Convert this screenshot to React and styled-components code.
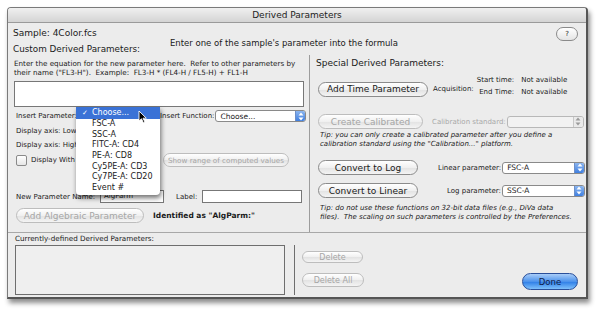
import styled, { createGlobalStyle } from 'styled-components';

const GlobalStyle = createGlobalStyle`
body {
  margin: 0;
  background: #ffffff;
  font-family: "DejaVu Sans", "Liberation Sans", sans-serif;
  color: #1a1a1a;
}
`

const menuItems = ['FSC-A', 'SSC-A', 'FITC-A: CD4', 'PE-A: CD8', 'Cy5PE-A: CD3', 'Cy7PE-A: CD20', 'Event #']

const Arrows = ({ disabled }) => (
    <svg width="6" height="9" viewBox="0 0 6 9">
        <path d="M3 0.5 L5.5 3.5 L0.5 3.5 Z" fill={disabled ? '#9a9a9a' : '#ffffff'}/>
        <path d="M3 8.5 L5.5 5.5 L0.5 5.5 Z" fill={disabled ? '#9a9a9a' : '#ffffff'}/>
    </svg>
)

const PopUp = ({ value, w, disabled }) => (
    <Select $w={w} $disabled={disabled}>
        <SelectText>{value}</SelectText>
        <SelectArrows $disabled={disabled}><Arrows disabled={disabled}/></SelectArrows>
    </Select>
)

const App = () => {
    return (
        <Page>
            <GlobalStyle/>
            <Window>
                <TitleBar>Derived Parameters</TitleBar>
                <Body>
                    <TopRow>
                        <Big>Sample: 4Color.fcs</Big>
                        <HelpButton>?</HelpButton>
                    </TopRow>
                    <HeadRow>
                        <Big>Custom Derived Parameters:</Big>
                        <Hint>Enter one of the sample's parameter into the formula</Hint>
                    </HeadRow>
                    <Columns>
                        <LeftCol>
                            <Small>
                                Enter the equation for the new parameter here.&nbsp; Refer to other parameters by<br/>
                                their name ("FL3-H").&nbsp; Example:&nbsp; FL3-H * (FL4-H / FL5-H) + FL1-H
                            </Small>
                            <TextArea/>
                            <Row $top={3}>
                                <Label $w={144}>Insert Parameter:</Label>
                                <Label>Insert Function:</Label>
                                <PopUp value="Choose..." w={91}/>
                            </Row>
                            <Row $top={5}>
                                <Label>Display axis: Low value:</Label>
                            </Row>
                            <Row $top={6}>
                                <Label>Display axis: High value:</Label>
                            </Row>
                            <Row $top={4}>
                                <Checkbox/>
                                <Label $w={132} $left={4}>Display With Log scale</Label>
                                <PushButton $w={126} $small disabled>Show range of computed values</PushButton>
                            </Row>
                            <Row $top={23}>
                                <Label $w={80}>New Parameter Name:</Label>
                                <TextInput $w={64}>AlgParm</TextInput>
                                <Label $left={12}>Label:</Label>
                                <TextInput $w={100} $left={5}/>
                            </Row>
                            <Row $top={5}>
                                <PushButton $w={128} disabled>Add Algebraic Parameter</PushButton>
                                <Bold>Identified as "AlgParm:"</Bold>
                            </Row>
                            <PopupMenu>
                                <MenuItem $active><Check>✓</Check>Choose...</MenuItem>
                                {menuItems.map(item => (
                                    <MenuItem key={item}>{item}</MenuItem>
                                ))}
                                <Cursor width="10" height="14" viewBox="0 0 10 14">
                                    <path d="M1 1 L1 11 L3.5 8.8 L5.5 13 L7 12.3 L5 8.2 L8.3 8.2 Z" fill="#000" stroke="#fff" strokeWidth="0.9"/>
                                </Cursor>
                            </PopupMenu>
                        </LeftCol>
                        <RightCol>
                            <Heading>Special Derived Parameters:</Heading>
                            <Row $top={13}>
                                <PushButton $w={110}>Add Time Parameter</PushButton>
                                <Label $left={5}>Acquisition:</Label>
                                <TimeGrid>
                                    <span>Start time:</span><span>Not available</span>
                                    <span>End Time:</span><span>Not available</span>
                                </TimeGrid>
                            </Row>
                            <Row $top={17}>
                                <PushButton $w={105} disabled>Create Calibrated</PushButton>
                                <Label $left={9} $muted>Calibration standard:</Label>
                                <PopUp value="" w={77} disabled/>
                            </Row>
                            <Tip>
                                Tip: you can only create a calibrated parameter after you define a<br/>
                                calibration standard using the "Calibration..." platform.
                            </Tip>
                            <Row $top={11}>
                                <PushButton $w={100}>Convert to Log</PushButton>
                                <Label $left={20}>Linear parameter:</Label>
                                <PopUp value="FSC-A" w={83}/>
                            </Row>
                            <Row $top={8}>
                                <PushButton $w={100}>Convert to Linear</PushButton>
                                <Label $left={29}>Log parameter:</Label>
                                <PopUp value="SSC-A" w={83}/>
                            </Row>
                            <Tip $top={6}>
                                Tip: do not use these functions on 32-bit data files (e.g., DiVa data<br/>
                                files).&nbsp; The scaling on such parameters is controlled by the Preferences.
                            </Tip>
                        </RightCol>
                    </Columns>
                    <Bottom>
                        <ListArea>
                            <Small>Currently-defined Derived Parameters:</Small>
                            <ListBox/>
                        </ListArea>
                        <VLine/>
                        <ButtonStack>
                            <PushButton $w={61} disabled>Delete</PushButton>
                            <PushButton $w={62} disabled>Delete All</PushButton>
                        </ButtonStack>
                        <DoneButton>Done</DoneButton>
                    </Bottom>
                </Body>
            </Window>
        </Page>
    )
}

export default App

const Page = styled.div`
width: 596px;
height: 311px;
padding: 7px 0 0 7px;
box-sizing: border-box;
`

const Window = styled.div`
width: 581px;
height: 292px;
display: flex;
flex-direction: column;
border: 1px solid #7a7a7a;
border-right: 2px solid #555;
border-bottom: 2px solid #555;
border-radius: 4px 4px 0 0;
box-shadow: 2px 4px 5px rgba(0, 0, 0, 0.45);
background: #ececec;
box-sizing: border-box;
overflow: hidden;
`

const TitleBar = styled.div`
height: 14px;
flex: none;
display: flex;
align-items: center;
justify-content: center;
font-size: 9px;
color: #222;
background: linear-gradient(#f0f0f0, #d4d4d4);
border-bottom: 1px solid #9a9a9a;
`

const Body = styled.div`
flex: 1;
display: flex;
flex-direction: column;
`

const TopRow = styled.div`
height: 16px;
flex: none;
display: flex;
align-items: flex-start;
justify-content: space-between;
padding: 5px 8px 0 5px;
box-sizing: border-box;
`

const Big = styled.div`
font-size: 9px;
line-height: 11px;
white-space: nowrap;
`

const HelpButton = styled.div`
width: 20px;
height: 12px;
margin-top: -1px;
border: 1px solid #8a8a8a;
border-radius: 7px;
background: linear-gradient(#ffffff, #e4e4e4);
font-size: 7px;
display: flex;
align-items: center;
justify-content: center;
`

const HeadRow = styled.div`
height: 16px;
flex: none;
display: grid;
grid-template-columns: 157px auto;
align-items: start;
padding-left: 5px;

${Big} {
  margin-top: 5px;
  font-size: 8.8px;
}
`

const Hint = styled.div`
font-size: 8.5px;
line-height: 9px;
white-space: nowrap;
`

const Columns = styled.div`
height: 177px;
flex: none;
display: flex;
`

const LeftCol = styled.div`
position: relative;
width: 301px;
flex: none;
padding: 4px 0 0 6px;
box-sizing: border-box;
`

const RightCol = styled.div`
flex: 1;
border-left: 1px solid #9c9c9c;
padding: 3px 0 0 6px;
`

const Small = styled.div`
font-size: 7.2px;
line-height: 9px;
white-space: nowrap;
`

const TextArea = styled.div`
width: 290px;
height: 26px;
margin-top: 4px;
background: #fff;
border: 1px solid #777;
box-sizing: border-box;
`

const Row = styled.div`
display: flex;
align-items: center;
padding-left: 2px;
margin-top: ${p => p.$top || 0}px;
`

const Label = styled.span`
font-size: 7px;
white-space: nowrap;
flex: none;
width: ${p => p.$w ? `${p.$w}px` : 'auto'};
margin-left: ${p => p.$left || 0}px;
color: ${p => p.$muted ? '#a8a8a8' : '#1a1a1a'};
`

const Bold = styled.span`
font-size: 7.5px;
font-weight: bold;
margin-left: 9px;
white-space: nowrap;
`

const Select = styled.div`
width: ${p => p.$w}px;
height: 12px;
flex: none;
margin-left: 1px;
display: flex;
align-items: center;
background: ${p => p.$disabled ? '#f2f2f2' : '#fff'};
border: 1px solid ${p => p.$disabled ? '#b8b8b8' : '#8a8a8a'};
border-radius: 3px;
box-sizing: border-box;
overflow: hidden;
`

const SelectText = styled.span`
flex: 1;
font-size: 7.5px;
padding-left: 4px;
white-space: nowrap;
`

const SelectArrows = styled.div`
width: 9px;
height: 100%;
display: flex;
align-items: center;
justify-content: center;
background: ${p => p.$disabled ? '#eaeaea' : 'linear-gradient(#8cb6f0, #3f7fe0)'};
border-left: 1px solid ${p => p.$disabled ? '#c8c8c8' : '#6d8fc8'};
`

const PushButton = styled.button`
width: ${p => p.$w}px;
height: ${p => p.$small ? 14 : 15}px;
flex: none;
padding: 0;
border: 1px solid ${p => p.disabled ? '#bdbdbd' : '#8b8b8b'};
border-radius: 8px;
background: linear-gradient(#ffffff, #f0f0f0 50%, #e2e2e2 51%, #f4f4f4);
font-family: "DejaVu Sans", sans-serif;
font-size: ${p => p.$small ? 7.2 : 9}px;
color: ${p => p.disabled ? '#a6a6a6' : '#1a1a1a'};
white-space: nowrap;
`

const Checkbox = styled.div`
width: 9px;
height: 9px;
flex: none;
border: 1px solid #8a8a8a;
border-radius: 2px;
background: linear-gradient(#fff, #e6e6e6);
`

const TextInput = styled.div`
width: ${p => p.$w}px;
height: 13px;
flex: none;
margin-left: ${p => p.$left ?? 4}px;
background: #fff;
border: 1px solid #777;
box-sizing: border-box;
font-size: 7px;
padding-left: 3px;
line-height: 11px;
`

const PopupMenu = styled.div`
position: absolute;
left: 68px;
top: 52px;
width: 84px;
background: #ffffff;
box-shadow: 1px 3px 5px rgba(0, 0, 0, 0.55);
border-radius: 0 0 4px 4px;
padding-bottom: 1px;
`

const MenuItem = styled.div`
position: relative;
padding-left: 16px;
font-size: 8px;
color: ${p => p.$active ? '#fff' : '#1a1a1a'};
background: ${p => p.$active ? '#3a72d6' : 'transparent'};
height: ${p => p.$active ? 12 : 10.7}px;
line-height: ${p => p.$active ? 12 : 10.7}px;
`

const Check = styled.span`
position: absolute;
left: 6px;
font-size: 7px;
`

const Cursor = styled.svg`
position: absolute;
left: 62px;
top: 3px;
`

const Heading = styled.div`
font-size: 9px;
line-height: 10px;
white-space: nowrap;
`

const TimeGrid = styled.div`
display: grid;
grid-template-columns: auto auto;
column-gap: 7px;
row-gap: 2px;
margin-left: 3px;
margin-top: -6px;
font-size: 7px;
line-height: 10px;

span:nth-child(odd) {
  text-align: right;
}
`

const Tip = styled.div`
font-size: 7px;
line-height: 9px;
font-style: italic;
margin-top: ${p => p.$top || 2}px;
padding-left: 4px;
white-space: nowrap;
`

const Bottom = styled.div`
flex: 1;
display: flex;
border-top: 1px solid #a8a8a8;
`

const ListArea = styled.div`
padding: 1px 0 0 7px;
width: 277px;
flex: none;
box-sizing: border-box;
`

const ListBox = styled.div`
width: 270px;
height: 50px;
margin-top: 2px;
background: #efefef;
border: 1px solid #6e6e6e;
box-sizing: border-box;
`

const VLine = styled.div`
width: 1px;
height: 50px;
margin: 12px 0 0 9px;
background: #6e6e6e;
`

const ButtonStack = styled.div`
display: flex;
flex-direction: column;
gap: 10px;
padding: 18px 0 0 7px;

${PushButton} {
  height: 12px;
  font-size: 8px;
}

${PushButton}:last-child {
  height: 14px;
}
`

const DoneButton = styled.button`
width: 56px;
height: 17px;
margin: 40px 8px 0 auto;
padding: 0;
border: 1px solid #2a4f9a;
border-radius: 9px;
background: linear-gradient(#a9cdf8, #4d93ec 50%, #2c7ce6 51%, #7ec0fb);
font-family: "DejaVu Sans", sans-serif;
font-size: 8.5px;
color: #10204a;
`
